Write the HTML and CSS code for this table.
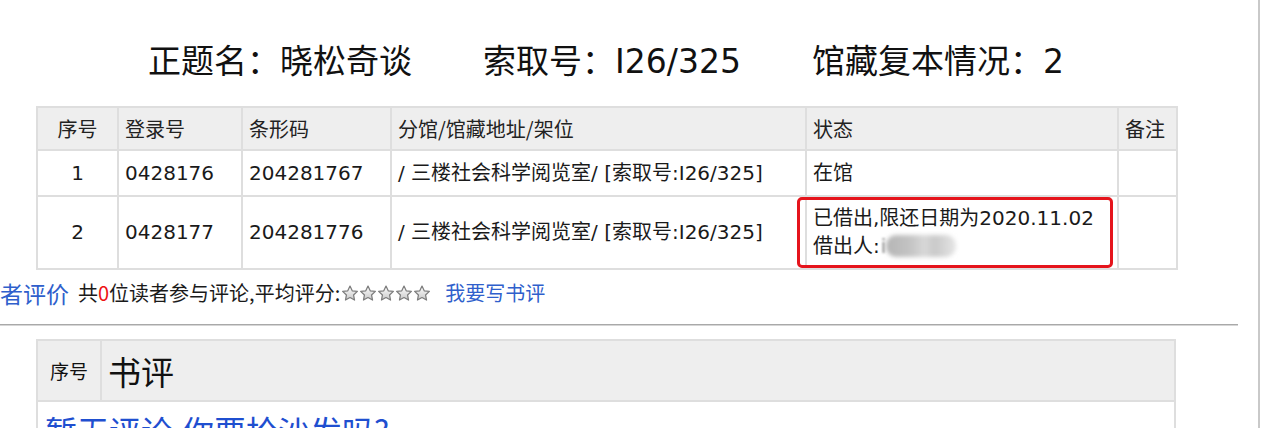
FILE: index.html
```html
<!DOCTYPE html>
<html lang="zh-CN">
<head>
<meta charset="utf-8">
<title>晓松奇谈</title>
<link rel="stylesheet" href="styles.css">
</head>
<body>
<div class="page">
  <div class="content">
    <h1 class="title"><span class="seg">正题名：晓松奇谈</span><span class="seg">索取号：I26/325</span><span class="seg">馆藏复本情况：2</span></h1>
    <table class="holdings">
      <colgroup>
        <col class="c1"><col class="c2"><col class="c3"><col class="c4"><col class="c5"><col class="c6">
      </colgroup>
      <thead>
        <tr><th class="center">序号</th><th>登录号</th><th>条形码</th><th>分馆/馆藏地址/架位</th><th>状态</th><th>备注</th></tr>
      </thead>
      <tbody>
        <tr class="r1"><td class="center">1</td><td>0428176</td><td>204281767</td><td>/ 三楼社会科学阅览室/ [索取号:I26/325]</td><td>在馆</td><td></td></tr>
        <tr class="r2"><td class="center">2</td><td>0428177</td><td>204281776</td><td>/ 三楼社会科学阅览室/ [索取号:I26/325]</td><td class="status-out">已借出,限还日期为2020.11.02<br>借出人:<span class="hint">i</span><span class="blurred"></span><span class="mark"></span></td><td></td></tr>
      </tbody>
    </table>
    <div class="review-bar">
      <a class="rv-title" href="#">者评价</a>
      <span class="rv-text">共<span class="zero">0</span>位读者参与评论,平均评分:</span><span class="stars">
        <svg class="star" viewBox="0 0 20 18"><defs><linearGradient id="sg" x1="0" y1="0" x2="0" y2="1"><stop offset="0" stop-color="#ffffff"/><stop offset="1" stop-color="#c8c8c8"/></linearGradient></defs><path d="M10 1.2l2.5 5.3 5.8.7-4.3 4 1.1 5.7L10 14.1l-5.1 2.8 1.1-5.7-4.3-4 5.8-.7z" fill="url(#sg)" stroke="#7d7d7d" stroke-width="1.4" stroke-linejoin="round"/></svg><svg class="star" viewBox="0 0 20 18"><path d="M10 1.2l2.5 5.3 5.8.7-4.3 4 1.1 5.7L10 14.1l-5.1 2.8 1.1-5.7-4.3-4 5.8-.7z" fill="url(#sg)" stroke="#7d7d7d" stroke-width="1.4" stroke-linejoin="round"/></svg><svg class="star" viewBox="0 0 20 18"><path d="M10 1.2l2.5 5.3 5.8.7-4.3 4 1.1 5.7L10 14.1l-5.1 2.8 1.1-5.7-4.3-4 5.8-.7z" fill="url(#sg)" stroke="#7d7d7d" stroke-width="1.4" stroke-linejoin="round"/></svg><svg class="star" viewBox="0 0 20 18"><path d="M10 1.2l2.5 5.3 5.8.7-4.3 4 1.1 5.7L10 14.1l-5.1 2.8 1.1-5.7-4.3-4 5.8-.7z" fill="url(#sg)" stroke="#7d7d7d" stroke-width="1.4" stroke-linejoin="round"/></svg><svg class="star" viewBox="0 0 20 18"><path d="M10 1.2l2.5 5.3 5.8.7-4.3 4 1.1 5.7L10 14.1l-5.1 2.8 1.1-5.7-4.3-4 5.8-.7z" fill="url(#sg)" stroke="#7d7d7d" stroke-width="1.4" stroke-linejoin="round"/></svg></span>
      <a class="write" href="#">我要写书评</a>
    </div>
    <hr class="rule">
    <table class="reviews">
      <colgroup><col class="rc1"><col class="rc2"></colgroup>
      <thead>
        <tr><th class="small">序号</th><th class="big">书评</th></tr>
      </thead>
      <tbody>
        <tr><td colspan="2" class="empty"><a href="#">暂无评论,你要抢沙发吗?</a></td></tr>
      </tbody>
    </table>
  </div>
</div>
</body>
</html>
```

FILE: styles.css
```css
html, body {
  margin: 0;
  padding: 0;
  background: #fff;
}
body {
  font-family: "DejaVu Sans", "Noto Sans CJK SC", sans-serif;
  color: #1a1a1a;
  overflow: hidden;
}
.page {
  width: 1258px;
  height: 428px;
  border-right: 2px solid #c9c9c9;
  overflow: hidden;
}
.content {
  width: 1258px;
}
.title {
  margin: 0 0 0 36px;
  width: 1140px;
  padding-top: 39px;
  height: 46px;
  line-height: 46px;
  font-size: 33px;
  font-weight: normal;
  text-align: center;
  font-family: "DejaVu Sans", "Noto Sans CJK SC", sans-serif;
  color: #111;
  white-space: nowrap;
}
.title .seg + .seg {
  margin-left: 71px;
}
.holdings {
  margin: 21px 0 0 36px;
  width: 1140px;
  border-collapse: collapse;
  table-layout: fixed;
  font-size: 20px;
}
.holdings .c1 { width: 81px; }
.holdings .c2 { width: 124px; }
.holdings .c3 { width: 149px; }
.holdings .c4 { width: 415px; }
.holdings .c5 { width: 312px; }
.holdings .c6 { width: 59px; }
.holdings th, .holdings td {
  border: 2px solid #dedede;
  padding: 7px 6px;
  text-align: left;
  font-weight: normal;
  line-height: 28px;
  vertical-align: middle;
  white-space: nowrap;
}
.holdings th {
  background: #eeeeee;
  font-family: "Noto Sans CJK SC", "DejaVu Sans", sans-serif;
  color: #222;
  padding-top: 7px;
  padding-bottom: 6px;
}
.holdings .center { text-align: center; }
.holdings .r1 td { padding-top: 8px; padding-bottom: 8px; }
.holdings .r2 td { padding-top: 7px; padding-bottom: 8px; }
.status-out {
  position: relative;
}
.status-out .hint {
  color: #888;
  margin-left: 1px;
  filter: blur(1px);
}
.blurred {
  display: inline-block;
  width: 70px;
  height: 22px;
  vertical-align: -4px;
  border-radius: 10px;
  background: linear-gradient(90deg, #b5b5b5 0%, #c4c4c4 35%, #d8d8d8 55%, #c9c9c9 70%, #e6e6e6 100%);
  filter: blur(2px);
}
.mark {
  position: absolute;
  left: -10px;
  right: 4px;
  top: 0;
  bottom: 0;
  border: 3px solid #e5141c;
  border-radius: 5px;
}
.review-bar {
  margin-top: 9px;
  height: 28px;
  line-height: 28px;
  display: flex;
  align-items: center;
  white-space: nowrap;
  font-family: "Noto Sans CJK SC", "DejaVu Sans", sans-serif;
}
.review-bar a {
  color: #2f5fcc;
  text-decoration: none;
}
.rv-title {
  font-size: 23px;
}
.rv-text {
  margin-left: 9px;
  font-size: 20px;
  color: #1a1a1a;
}
.zero { color: #ee1111; }
.stars {
  display: flex;
  margin-left: 1px;
}
.star {
  width: 18px;
  height: 16px;
  display: block;
}
.write {
  margin-left: 14px;
  font-size: 20px;
}
.rule {
  margin: 17px 0 0 0;
  width: 1238px;
  height: 0;
  border: 0;
  border-top: 1px solid #a9a9a9;
  border-bottom: 1px solid #d6d6d6;
}
.reviews {
  margin: 13px 0 0 36px;
  width: 1140px;
  border-collapse: collapse;
  table-layout: fixed;
}
.reviews .rc1 { width: 64px; }
.reviews th, .reviews td {
  border: 2px solid #dedede;
  text-align: left;
  font-weight: normal;
  font-family: "Noto Sans CJK SC", "DejaVu Sans", sans-serif;
}
.reviews th {
  background: #eeeeee;
  height: 59px;
  padding: 0 6px;
  color: #111;
}
.reviews .small { font-size: 19px; text-align: center; }
.reviews .big { font-size: 33px; }
.reviews .empty {
  padding: 6px 7px;
  font-size: 32px;
  line-height: 44px;
}
.reviews .empty a {
  color: #1f4fd0;
  text-decoration: none;
}
```
